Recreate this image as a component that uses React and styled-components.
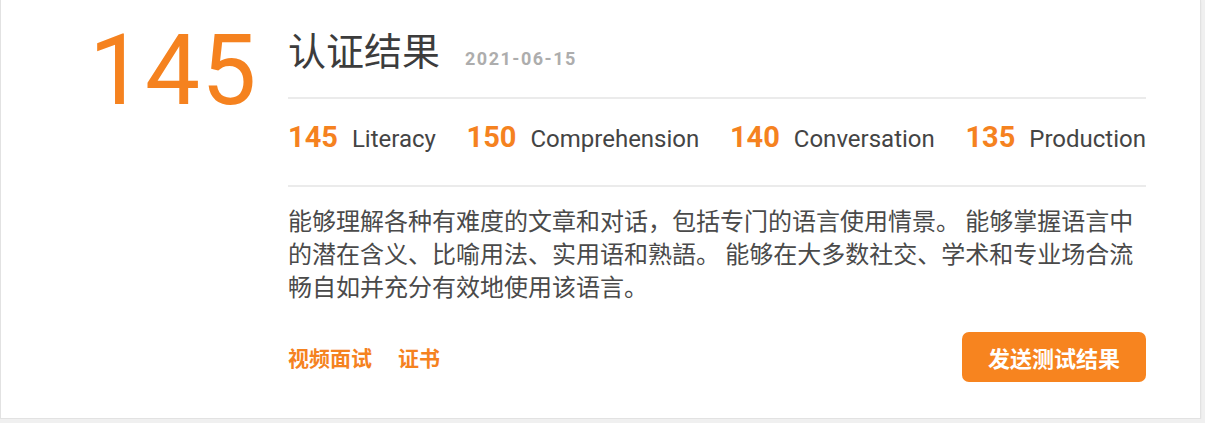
import React from "react";
import styled, { createGlobalStyle } from "styled-components";

const GlobalStyle = createGlobalStyle`
  html, body {
    margin: 0;
    padding: 0;
    background: #f0f0f0;
  }
  body {
    font-family: Roboto, "Noto Sans CJK SC", sans-serif;
    color: #444;
  }
`;

const ORANGE = "#f5821f";

const scores = [
  { value: 145, label: "Literacy" },
  { value: 150, label: "Comprehension" },
  { value: 140, label: "Conversation" },
  { value: 135, label: "Production" },
];

const Card = styled.section`
  box-sizing: border-box;
  width: 1201px;
  background: #fff;
  border: 1px solid #e2e2e2;
  border-top: none;
  box-shadow: 0 1px 2px rgba(0, 0, 0, 0.05);
  display: grid;
  grid-template-columns: 287px 1fr;
  padding: 30px 54px 36px 0;
`;

const BigScore = styled.div`
  font-family: Roboto, sans-serif;
  font-size: 98px;
  line-height: 1;
  font-weight: 400;
  color: ${ORANGE};
  padding-left: 88px;
  margin-top: -8px;
  letter-spacing: 1px;
`;

const Body = styled.div`
  display: flex;
  flex-direction: column;
`;

const TitleRow = styled.header`
  display: flex;
  align-items: baseline;
  gap: 25px;
`;

const Title = styled.h1`
  margin: 0;
  font-family: "Noto Sans CJK SC", sans-serif;
  font-size: 38px;
  line-height: 1;
  font-weight: 400;
  color: #3c3c3c;
`;

const DateText = styled.span`
  font-family: Roboto, sans-serif;
  font-size: 18px;
  font-weight: 700;
  letter-spacing: 1.5px;
  color: #adadad;
`;

const Divider = styled.hr`
  margin: ${(p) => p.$top || 0}px 0 0;
  border: none;
  height: 2px;
  background: #ebebeb;
`;

const ScoreRow = styled.div`
  display: flex;
  justify-content: space-between;
  align-items: baseline;
  padding: 20px 0 28px;
  line-height: 36px;
`;

const ScoreItem = styled.div`
  display: flex;
  align-items: baseline;
  gap: 14px;
`;

const ScoreValue = styled.span`
  font-family: Roboto, sans-serif;
  font-size: 29px;
  font-weight: 700;
  color: ${ORANGE};
`;

const ScoreLabel = styled.span`
  font-family: Roboto, sans-serif;
  font-size: 24px;
  color: #444;
`;

const Description = styled.p`
  margin: 16px 0 0;
  font-family: "Noto Sans CJK SC", sans-serif;
  font-size: 24px;
  line-height: 33px;
  color: #4a4a4a;
`;

const Footer = styled.footer`
  display: flex;
  align-items: center;
  justify-content: space-between;
  margin-top: 30px;
`;

const Links = styled.nav`
  display: flex;
  gap: 26px;
`;

const LinkText = styled.a`
  font-family: "Noto Sans CJK SC", sans-serif;
  font-size: 21px;
  font-weight: 700;
  color: ${ORANGE};
  text-decoration: none;
  cursor: pointer;
`;

const SendButton = styled.button`
  height: 50px;
  padding: 0 26px;
  border: none;
  border-radius: 7px;
  background: #f7841f;
  color: #fff;
  font-family: "Noto Sans CJK SC", sans-serif;
  font-size: 22px;
  font-weight: 700;
  cursor: pointer;
`;

export default function App() {
  return (
    <>
      <GlobalStyle />
      <Card>
        <BigScore>145</BigScore>
        <Body>
          <TitleRow>
            <Title>认证结果</Title>
            <DateText>2021-06-15</DateText>
          </TitleRow>
          <Divider $top={28} />
          <ScoreRow>
            {scores.map(({ value, label }) => (
              <ScoreItem key={label}>
                <ScoreValue>{value}</ScoreValue>
                <ScoreLabel>{label}</ScoreLabel>
              </ScoreItem>
            ))}
          </ScoreRow>
          <Divider />
          <Description>
            能够理解各种有难度的文章和对话，包括专门的语言使用情景。 能够掌握语言中的潜在含义、比喻用法、实用语和熟語。 能够在大多数社交、学术和专业场合流畅自如并充分有效地使用该语言。
          </Description>
          <Footer>
            <Links>
              <LinkText>视频面试</LinkText>
              <LinkText>证书</LinkText>
            </Links>
            <SendButton>发送测试结果</SendButton>
          </Footer>
        </Body>
      </Card>
    </>
  );
}
